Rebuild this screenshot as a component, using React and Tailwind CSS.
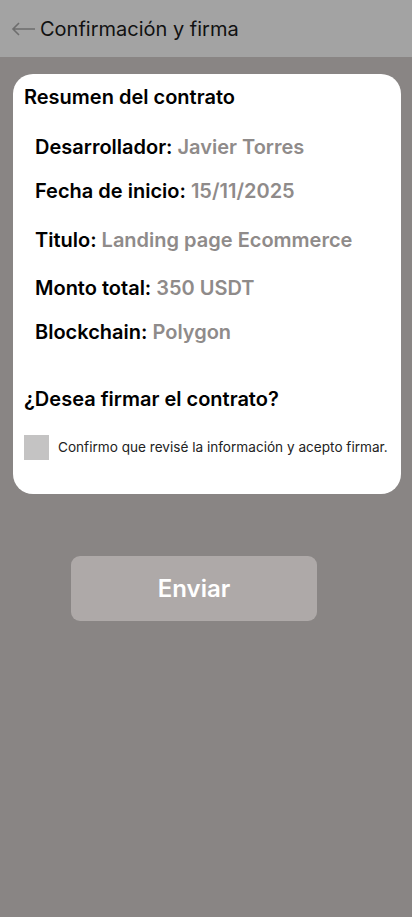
import React from "react";

export default function App() {
  return (
    <div className="min-h-[917px] w-[412px] bg-[#898584] font-['Inter',sans-serif]">
      <header className="h-[57px] bg-[#a3a3a3] flex items-center pl-[11px]">
        <svg width="25" height="14" viewBox="0 0 25 14" fill="none" className="mt-[1px]">
          <path d="M24 7H2M8 1L2 7l6 6" stroke="#6e6e6e" strokeWidth="1.6" />
        </svg>
        <span className="ml-[4px] text-[20px] text-[#111]">Confirmación y firma</span>
      </header>
      <main className="px-[13px] pt-[17px]">
        <section className="bg-white rounded-[20px] w-[388px] pt-[11px] pb-[34px]">
          <h2 className="pl-[11px] text-[20px] font-semibold text-black leading-[24px]">Resumen del contrato</h2>
          <div className="pl-[22px] mt-[26px] flex flex-col text-[20px] font-semibold leading-[24px]">
            <p><span className="text-black">Desarrollador: </span><span className="text-[#8f8b8a]">Javier Torres</span></p>
            <p className="mt-[20px]"><span className="text-black">Fecha de inicio: </span><span className="text-[#8f8b8a]">15/11/2025</span></p>
            <p className="mt-[25px]"><span className="text-black">Titulo: </span><span className="text-[#8f8b8a]">Landing page Ecommerce</span></p>
            <p className="mt-[24px]"><span className="text-black">Monto total: </span><span className="text-[#8f8b8a]">350 USDT</span></p>
            <p className="mt-[20px]"><span className="text-black">Blockchain: </span><span className="text-[#8f8b8a]">Polygon</span></p>
          </div>
          <h3 className="pl-[11px] mt-[43px] text-[20px] font-semibold text-black leading-[24px]">¿Desea firmar el contrato?</h3>
          <div className="pl-[11px] mt-[24px] flex items-center">
            <div className="w-[25px] h-[25px] bg-[#c4c3c3]" />
            <span className="ml-[9px] text-[13.6px] text-[#222]">Confirmo que revisé la información y acepto firmar.</span>
          </div>
        </section>
        <div className="flex justify-center mt-[62px]">
          <button className="w-[246px] h-[65px] ml-[-24px] rounded-[9px] bg-[#aea9a8] text-white text-[24px] font-semibold">Enviar</button>
        </div>
      </main>
    </div>
  );
}
